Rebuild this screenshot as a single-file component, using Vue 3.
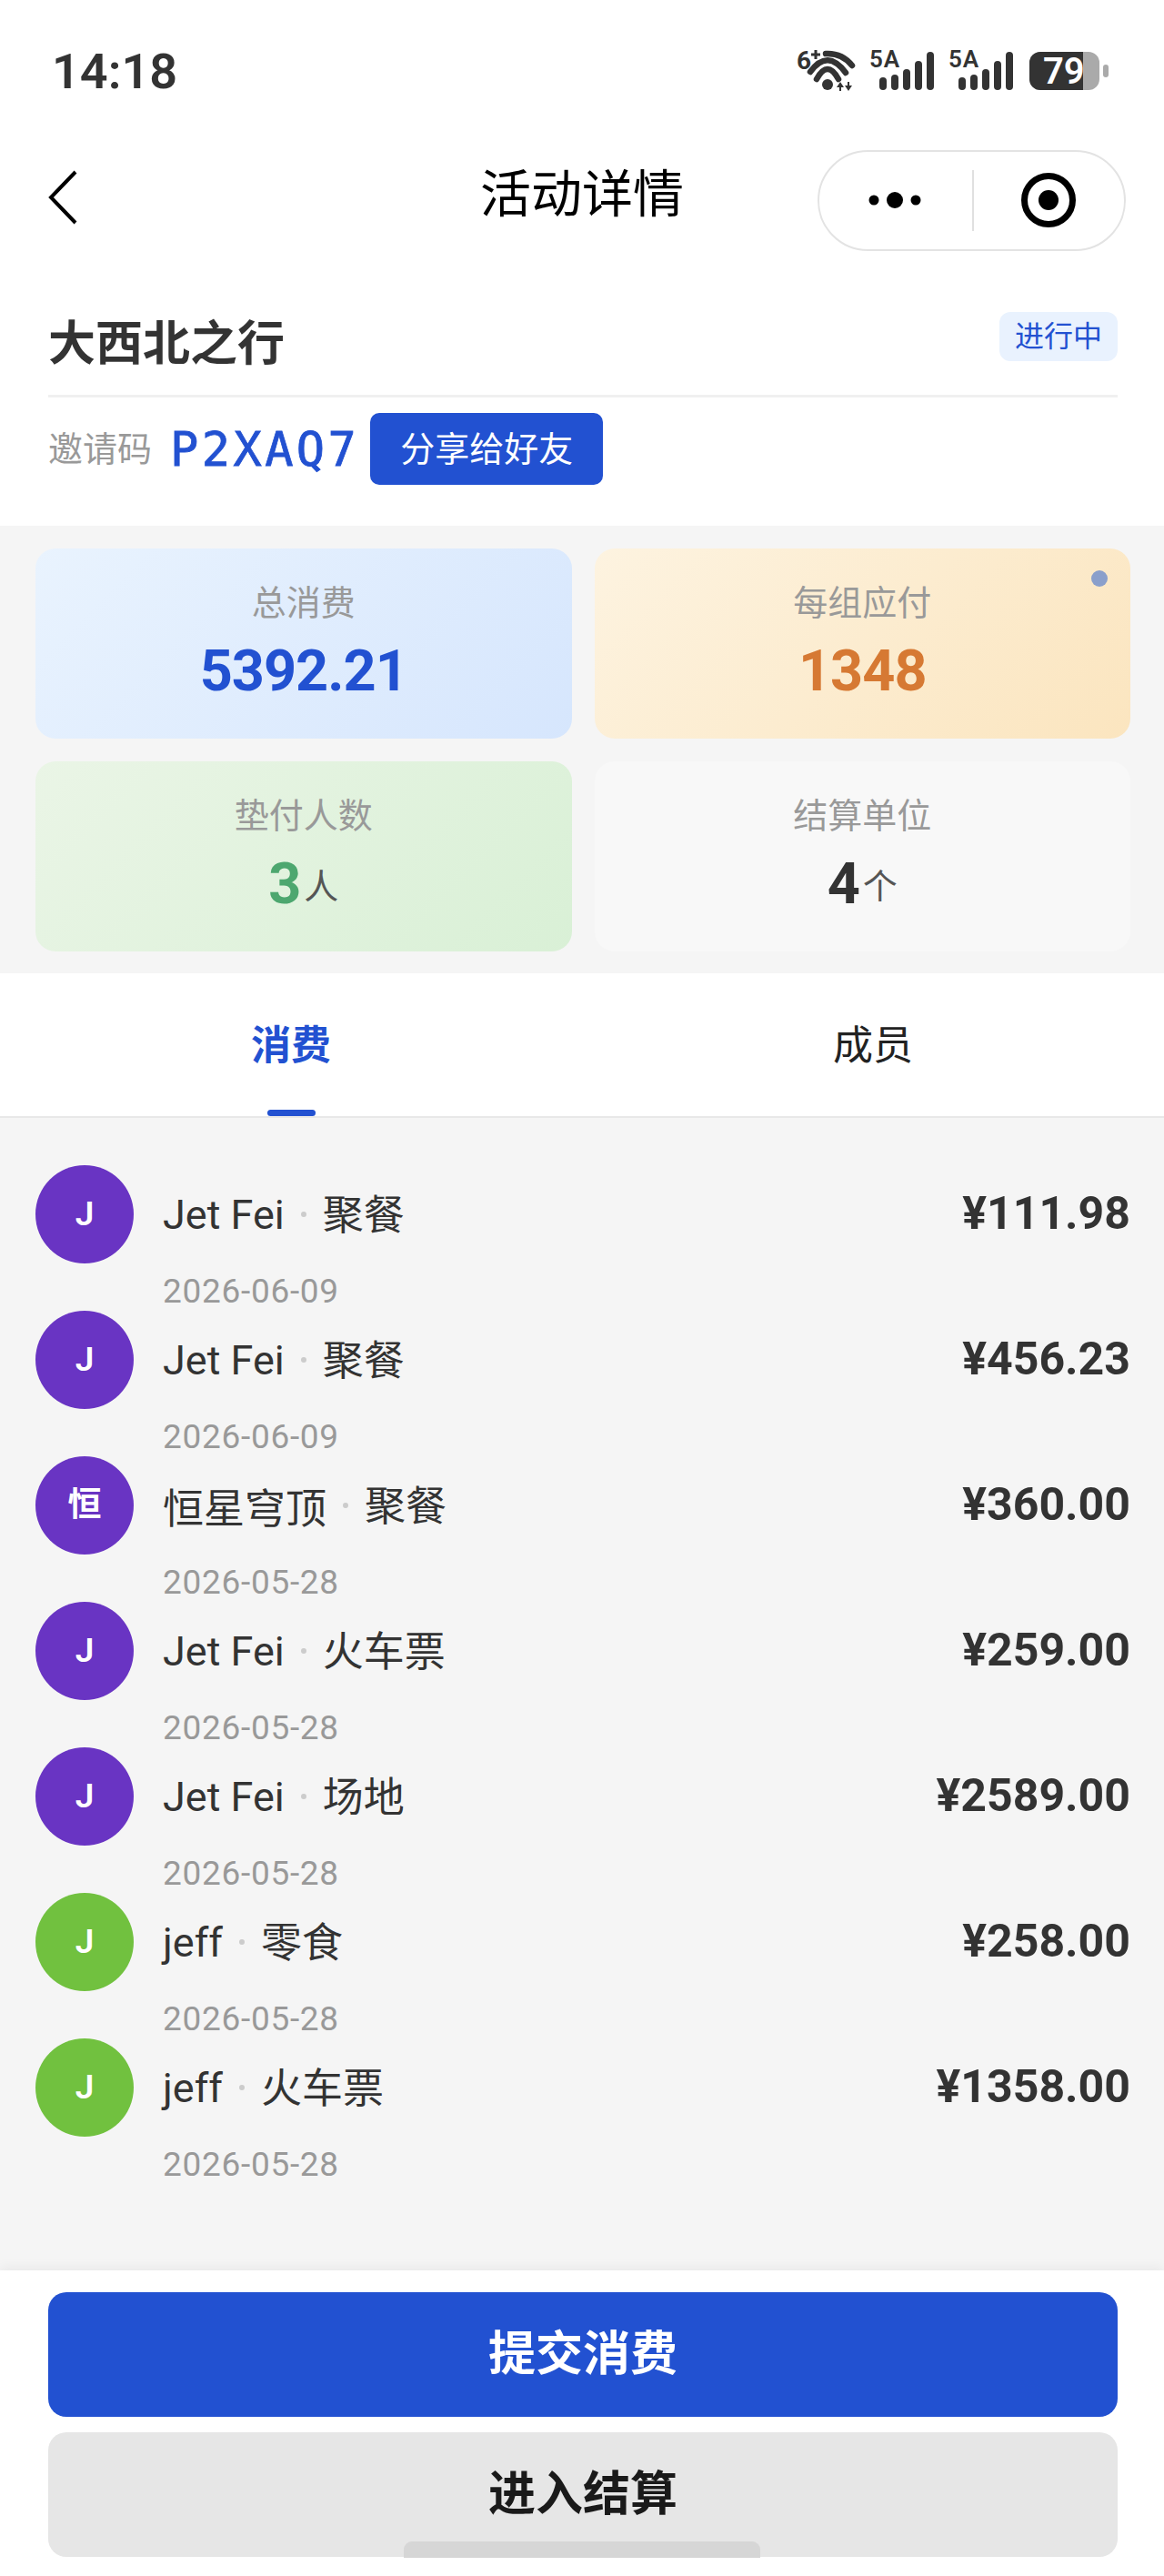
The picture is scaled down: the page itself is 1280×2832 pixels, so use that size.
<template>
  <div class="page">
    <div class="status-bar">
      <span class="clock">14:18</span>
      <svg class="status-icons" viewBox="870 50 355 60" width="355" height="60">
        <g fill="none" stroke="#333" stroke-width="6.5" stroke-linecap="round">
          <path d="M898 89Q910 67 922 89" />
          <path d="M891 81Q910 55 930 82" />
          <path d="M908 61Q926 60 937 74" />
        </g>
        <circle cx="910" cy="95" r="6" fill="#333" />
        <text x="876" y="78" class="wifi-label">6</text>
        <path d="M897 57v10M892 62h10" stroke="#333" stroke-width="3" />
        <path d="M924 92l-4 6h3v4h2v-4h3zM933 102l4-6h-3v-4h-2v4h-3z" fill="#333" />
        <g v-for="x in signalOffsets" :key="x" :transform="`translate(${x} 0)`">
          <text x="956" y="76" class="sig-label">5A</text>
          <rect x="967" y="87" width="8" height="14" rx="4" fill="#333" />
          <rect x="980" y="84" width="8" height="17" rx="4" fill="#333" />
          <rect x="993" y="78" width="8" height="23" rx="4" fill="#333" />
          <rect x="1006" y="69" width="8" height="32" rx="4" fill="#333" />
          <rect x="1019" y="59" width="8" height="42" rx="4" fill="#333" />
        </g>
        <rect x="1132" y="59" width="77" height="42" rx="12" fill="#aaa" />
        <path d="M1144 59h47v42h-47a12 12 0 0 1-12-12v-18a12 12 0 0 1 12-12z" fill="#333" />
        <rect x="1213" y="73" width="6" height="14" rx="3" fill="#aaa" />
        <text x="1147" y="94" class="bat-label">79</text>
      </svg>
    </div>

    <div class="nav-bar">
      <svg class="back" viewBox="0 0 32 60" width="32" height="60">
        <path d="M30 2L3 30l27 28" fill="none" stroke="#000" stroke-width="4" />
      </svg>
      <span class="nav-title">活动详情</span>
      <div class="capsule">
        <svg class="capsule-dots" viewBox="0 0 60 20" width="60" height="20">
          <circle cx="7" cy="10" r="5.5" />
          <circle cx="30" cy="10" r="9" />
          <circle cx="53" cy="10" r="5.5" />
        </svg>
        <i class="capsule-line"></i>
        <svg class="capsule-target" viewBox="0 0 60 60" width="60" height="60">
          <circle cx="30" cy="30" r="26.5" fill="none" stroke="#000" stroke-width="7" />
          <circle cx="30" cy="30" r="11" />
        </svg>
      </div>
    </div>

    <header class="activity">
      <div class="activity-top">
        <h1>大西北之行</h1>
        <span class="state">进行中</span>
      </div>
      <div class="invite">
        <span class="invite-label">邀请码</span>
        <span class="invite-code">P2XAQ7</span>
        <button class="share">分享给好友</button>
      </div>
    </header>

    <section class="stats">
      <div class="stat stat-blue">
        <span class="stat-label">总消费</span>
        <strong class="stat-value">5392.21</strong>
      </div>
      <div class="stat stat-orange">
        <i class="stat-dot"></i>
        <span class="stat-label">每组应付</span>
        <strong class="stat-value">1348</strong>
      </div>
      <div class="stat stat-green">
        <span class="stat-label">垫付人数</span>
        <span><strong class="stat-value">3</strong><em class="stat-unit">人</em></span>
      </div>
      <div class="stat stat-gray">
        <span class="stat-label">结算单位</span>
        <span><strong class="stat-value">4</strong><em class="stat-unit">个</em></span>
      </div>
    </section>

    <nav class="tabs">
      <div class="tab tab-active">消费</div>
      <div class="tab">成员</div>
    </nav>

    <main class="expenses">
      <div v-for="(item, i) in expenses" :key="i" class="expense">
        <div class="avatar" :class="item.user === 'jeff' ? 'avatar-green' : 'avatar-purple'">{{ item.initial }}</div>
        <div class="expense-info">
          <div class="expense-title">
            <span>{{ item.user }}</span>
            <i class="sep"></i>
            <span class="expense-kind">{{ item.kind }}</span>
          </div>
          <div class="expense-date">{{ item.date }}</div>
        </div>
        <div class="expense-amount">¥{{ item.amount }}</div>
      </div>
    </main>

    <footer class="actions">
      <button class="action action-primary">提交消费</button>
      <button class="action action-secondary">进入结算</button>
      <i class="home-bar"></i>
    </footer>
  </div>
</template>

<script setup>
const signalOffsets = [0, 87]

const expenses = [
  { user: 'Jet Fei', initial: 'J', kind: '聚餐', date: '2026-06-09', amount: '111.98' },
  { user: 'Jet Fei', initial: 'J', kind: '聚餐', date: '2026-06-09', amount: '456.23' },
  { user: '恒星穹顶', initial: '恒', kind: '聚餐', date: '2026-05-28', amount: '360.00' },
  { user: 'Jet Fei', initial: 'J', kind: '火车票', date: '2026-05-28', amount: '259.00' },
  { user: 'Jet Fei', initial: 'J', kind: '场地', date: '2026-05-28', amount: '2589.00' },
  { user: 'jeff', initial: 'J', kind: '零食', date: '2026-05-28', amount: '258.00' },
  { user: 'jeff', initial: 'J', kind: '火车票', date: '2026-05-28', amount: '1358.00' }
]
</script>

<style>
body {
  background: #f5f5f5;
}
</style>

<style scoped>
.page {
  position: relative;
  display: flex;
  flex-direction: column;
  height: 2832px;
  overflow: hidden;
  background: #f5f5f5;
  color: #333;
  font-family: Roboto, 'Noto Sans CJK SC', sans-serif;
}

.status-bar {
  display: flex;
  justify-content: space-between;
  align-items: center;
  height: 156px;
  padding: 0 55px 0 57px;
  box-sizing: border-box;
  background: #fff;
}

.clock {
  font-size: 54px;
  font-weight: 600;
  color: #333;
}

.status-icons {
  display: block;
}

.wifi-label {
  font-family: Roboto, sans-serif;
  font-size: 28px;
  font-weight: 700;
  fill: #333;
}

.sig-label {
  font-family: Roboto, sans-serif;
  font-size: 26px;
  font-weight: 600;
  letter-spacing: 1px;
  fill: #333;
}

.bat-label {
  font-family: Roboto, sans-serif;
  font-size: 40px;
  font-weight: 600;
  fill: #fff;
}

.nav-bar {
  position: relative;
  display: flex;
  justify-content: space-between;
  align-items: center;
  height: 128px;
  padding: 0 42px 0 53px;
  background: #fff;
}

.back {
  margin-bottom: 6px;
}

.nav-title {
  position: absolute;
  left: 0;
  right: 0;
  top: 22px;
  text-align: center;
  font-size: 56px;
  line-height: 72px;
  color: #000;
}

.capsule {
  display: flex;
  align-items: center;
  width: 339px;
  height: 111px;
  padding-left: 53px;
  box-sizing: border-box;
  border: 2px solid #e3e3e3;
  border-radius: 56px;
}

.capsule-line {
  width: 2px;
  height: 67px;
  margin: 0 52px 0 55px;
  background: #e0e0e0;
}

.activity {
  padding: 43px 51px 45px 53px;
  background: #fff;
}

.activity-top {
  display: flex;
  justify-content: space-between;
  align-items: flex-start;
  height: 107px;
  border-bottom: 3px solid #f0f0f0;
}

h1 {
  margin: 0;
  margin-top: 16px;
  font-size: 52px;
  line-height: 72px;
  font-weight: 700;
  color: #333;
}

.state {
  margin-top: 16px;
  padding: 0 17px;
  height: 54px;
  line-height: 54px;
  border-radius: 12px;
  font-size: 32px;
  color: #2251d1;
  background: #e9f2fe;
}

.invite {
  display: flex;
  align-items: center;
  margin-top: 17px;
}

.invite-label {
  margin-bottom: 6px;
  font-size: 38px;
  color: #999;
}

.invite-code {
  margin-left: 20px;
  font-family: 'DejaVu Sans Mono', monospace;
  font-size: 52px;
  letter-spacing: 3.4px;
  -webkit-text-stroke: 0.8px #2251d1;
  color: #2251d1;
}

.share {
  width: 256px;
  height: 79px;
  margin-left: 12px;
  padding: 0 0 6px;
  border: none;
  border-radius: 10px;
  background: #2251d1;
  color: #fff;
  font-family: inherit;
  font-size: 38px;
}

.stats {
  display: grid;
  grid-template-columns: 1fr 1fr;
  gap: 25px;
  padding: 25px 37px 24px 39px;
}

.stat {
  position: relative;
  display: flex;
  flex-direction: column;
  align-items: center;
  height: 209px;
  padding-top: 32px;
  box-sizing: border-box;
  border-radius: 22px;
}

.stat-blue {
  background: linear-gradient(135deg, #e9f3fe, #d6e6fd);
}

.stat-orange {
  background: linear-gradient(135deg, #fdf3e0, #fbe5bf);
}

.stat-green {
  background: linear-gradient(135deg, #eaf5e6, #d9f0d6);
}

.stat-gray {
  background: #f8f8f8;
}

.stat-dot {
  position: absolute;
  top: 24px;
  right: 25px;
  width: 18px;
  height: 18px;
  border-radius: 50%;
  background: #8a9fcb;
}

.stat-label {
  margin-bottom: 5px;
  font-size: 38px;
  line-height: 56px;
  color: #999;
}

.stat-value {
  font-size: 63px;
  line-height: 84px;
  font-weight: 700;
  letter-spacing: -1px;
}

.stat-blue .stat-value {
  color: #2251d1;
}

.stat-orange .stat-value {
  color: #d67933;
}

.stat-green .stat-value {
  color: #4da76f;
}

.stat-unit {
  margin-left: 4px;
  font-size: 38px;
  font-style: normal;
  vertical-align: 5px;
  color: #555;
}

.tabs {
  display: flex;
  height: 159px;
  box-sizing: border-box;
  border-bottom: 2px solid #e8e8e8;
  background: #fff;
}

.tab {
  position: relative;
  flex: 1;
  text-align: center;
  line-height: 160px;
  font-size: 44px;
  color: #222;
}

.tab-active {
  font-weight: 700;
  color: #2251d1;
}

.tab-active::after {
  content: '';
  position: absolute;
  left: 294px;
  bottom: 0;
  width: 53px;
  height: 7px;
  border-radius: 4px;
  background: #2251d1;
}

.expenses {
  flex: 1;
  padding: 52px 37px 0 39px;
}

.expense {
  display: flex;
  height: 160px;
}

.avatar {
  flex: none;
  width: 108px;
  height: 108px;
  border-radius: 50%;
  text-align: center;
  line-height: 108px;
  font-size: 37px;
  font-weight: 600;
  color: #fff;
}

.avatar-purple {
  background: #6934c3;
}

.avatar-green {
  background: #71c13f;
}

.expense-info {
  flex: 1;
  margin-left: 32px;
}

.expense-title {
  display: flex;
  align-items: center;
  height: 108px;
  font-size: 45px;
  color: #333;
}

.expense-kind {
  margin-bottom: 5px;
}

.sep {
  width: 6px;
  height: 6px;
  margin: 0 18px;
  border-radius: 50%;
  background: #ccc;
}

.expense-date {
  margin-top: 9px;
  font-size: 37px;
  line-height: 44px;
  letter-spacing: 0.7px;
  color: #999;
}

.expense-amount {
  height: 106px;
  line-height: 106px;
  font-size: 50px;
  font-weight: 700;
  color: #333;
}

.actions {
  position: relative;
  display: flex;
  flex-direction: column;
  gap: 17px;
  height: 336px;
  padding: 24px 51px 0 53px;
  box-sizing: border-box;
  background: #fff;
  box-shadow: 0 -4px 12px rgba(0, 0, 0, 0.05);
}

.action {
  height: 137px;
  padding: 0 0 10px;
  border: none;
  border-radius: 20px;
  font-family: inherit;
  font-size: 52px;
  font-weight: 700;
}

.action-primary {
  background: #2251d1;
  color: #fff;
}

.action-secondary {
  background: #e6e6e6;
  color: #1a1a1a;
}

.home-bar {
  position: absolute;
  left: 444px;
  top: 298px;
  width: 392px;
  height: 18px;
  border-radius: 9px 9px 0 0;
  background: #d6d6d6;
}
</style>
